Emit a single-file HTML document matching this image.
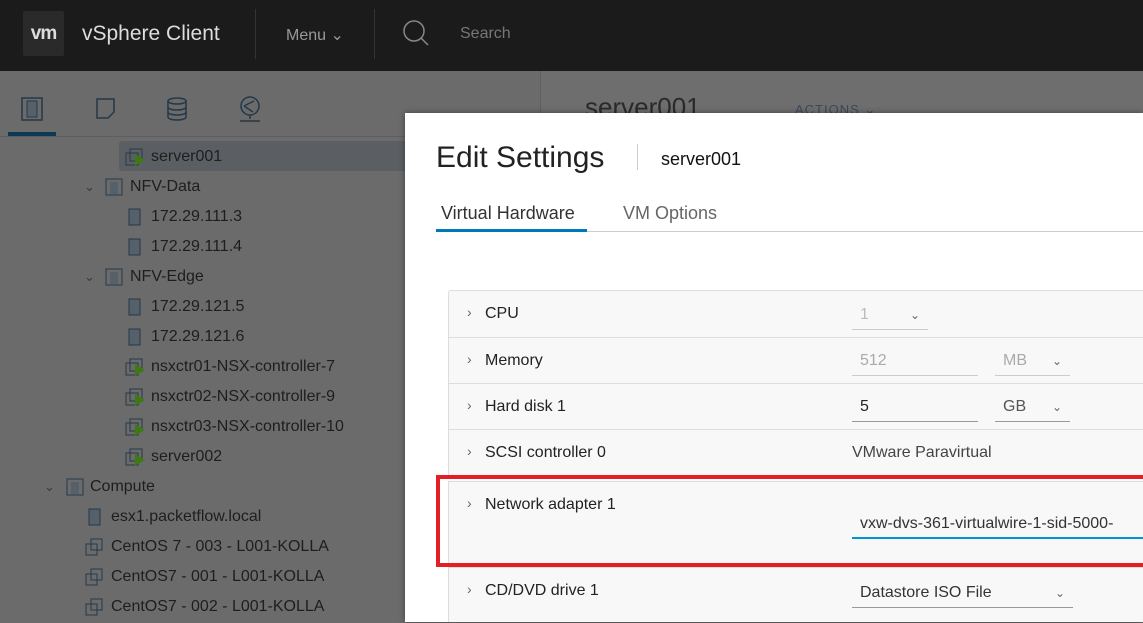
<!DOCTYPE html>
<html style="background:#6b6b6b"><head><style>
*{margin:0;padding:0;box-sizing:border-box}
body{width:1143px;height:622px;overflow:hidden;position:relative;background:#6b6b6b;font-family:"Liberation Sans",sans-serif;color:#1e1e1e}
.bg{position:absolute;left:0;top:0;width:1143px;height:622px;background:#6b6b6b}
.hdr{position:absolute;left:0;top:0;width:1143px;height:71px;background:#1b1b1b}
.abs{position:absolute;white-space:nowrap}
.row{position:absolute;font-size:16px;height:30px;line-height:32px;white-space:nowrap;color:#1e1e1e}
.row svg{position:absolute;top:7px}
.chev{position:absolute;top:0;color:#3a3a3a;font-size:13px}
.modal{position:absolute;left:405px;top:113px;width:738px;height:509px;background:#fff;box-shadow:0 0 6px rgba(0,0,0,.4)}
.tr{position:absolute;left:43px;width:700px;background:#f8f8f8;border-top:1px solid #ddd;font-size:16px;color:#222}
.tr .lbl{position:absolute;left:36px;top:14px}
.tr .ar{position:absolute;left:18px;top:13px;color:#666;font-size:14px}
.inp{position:absolute;border-bottom:1px solid #999;font-size:16px;height:30px;line-height:30px;padding-left:8px}
.dd{position:absolute;right:8px;top:0;color:#666;font-size:12px}
</style></head><body>
<div class="bg"></div>
<div class="hdr">
 <div class="abs" style="left:23px;top:11px;width:41px;height:45px;background:#2a2a2a;border-radius:2px;color:#ddd;font-weight:bold;font-size:19px;line-height:45px;text-align:center;letter-spacing:-1px">vm</div>
 <div class="abs" style="left:82px;top:22px;font-size:21px;color:#ddd">vSphere Client</div>
 <div class="abs" style="left:255px;top:9px;width:1px;height:50px;background:#333"></div>
 <div class="abs" style="left:286px;top:25px;font-size:16px;color:#999">Menu ⌄</div>
 <div class="abs" style="left:374px;top:9px;width:1px;height:50px;background:#333"></div>
 <svg class="abs" style="left:402px;top:19px" width="30" height="30"><circle cx="12" cy="12" r="10" stroke="#888" stroke-width="1.5" fill="none"/><line x1="19" y1="19" x2="26" y2="26" stroke="#888" stroke-width="1.5"/></svg>
 <div class="abs" style="left:460px;top:25px;font-size:16px;color:#777">Search</div>
</div>
<div class="abs" style="left:540px;top:71px;width:1px;height:551px;background:#5f5f5f"></div>
<div class="abs" style="left:541px;top:71px;width:602px;height:551px;background:#6e6e6e"></div>
<div class="abs" style="left:585px;top:92px;font-size:26px;color:#2a2a2a">server001</div>
<div class="abs" style="left:795px;top:102px;font-size:13px;color:#3a4a5a;letter-spacing:1px">ACTIONS ⌄</div>
<svg class="abs" style="left:20px;top:96px" width="26" height="26"><rect x="2" y="2" width="20" height="22" fill="none" stroke="#243848" stroke-width="1.5"/><rect x="7" y="5" width="10" height="16" fill="#55606a" stroke="#243848"/></svg>
<svg class="abs" style="left:94px;top:97px" width="24" height="24"><path d="M3 2h17v13l-6 6H3z" fill="none" stroke="#243848" stroke-width="1.5"/></svg>
<svg class="abs" style="left:166px;top:96px" width="22" height="26"><ellipse cx="11" cy="5" rx="9" ry="3" fill="none" stroke="#243848" stroke-width="1.5"/><path d="M2 5v16c0 4 18 4 18 0V5M2 11c0 4 18 4 18 0M2 16c0 4 18 4 18 0" fill="none" stroke="#243848" stroke-width="1.5"/></svg>
<svg class="abs" style="left:236px;top:95px" width="28" height="30"><circle cx="14" cy="11" r="9" fill="none" stroke="#243848" stroke-width="1.5"/><path d="M8 11l10-5M8 11l9 6M14 20v4M4 26h20" stroke="#243848" stroke-width="1.5" fill="none"/></svg>
<div class="abs" style="left:8px;top:132px;width:48px;height:4px;background:#0b3a55"></div>
<div class="abs" style="left:0;top:136px;width:540px;height:1px;background:#5e5e5e"></div>
<div class="abs" style="left:119px;top:141px;width:300px;height:30px;background:#5b5f63;border-radius:3px"></div>
<div class="row" style="top:141px;left:125px"><svg width="22" height="18" style="left:0"><rect x="1" y="5" width="12" height="12" fill="none" stroke="#243848"/><rect x="5" y="1" width="12" height="12" fill="none" stroke="#243848"/><path d="M10 6l10 6-10 6z" fill="#3d7a14"/></svg><span style="margin-left:26px">server001</span></div>
<div class="row" style="top:171px;left:84px"><span class="chev">⌄</span><svg width="18" height="18" style="left:21px"><rect x="1" y="1" width="16" height="16" fill="none" stroke="#243848"/><rect x="5" y="4" width="8" height="12" fill="#55606a"/></svg><span style="margin-left:46px">NFV-Data</span></div>
<div class="row" style="top:201px;left:128px"><svg width="14" height="18" style="left:0"><rect x="1" y="1" width="11" height="16" fill="#55606a" stroke="#243848"/></svg><span style="margin-left:23px">172.29.111.3</span></div>
<div class="row" style="top:231px;left:128px"><svg width="14" height="18" style="left:0"><rect x="1" y="1" width="11" height="16" fill="#55606a" stroke="#243848"/></svg><span style="margin-left:23px">172.29.111.4</span></div>
<div class="row" style="top:261px;left:84px"><span class="chev">⌄</span><svg width="18" height="18" style="left:21px"><rect x="1" y="1" width="16" height="16" fill="none" stroke="#243848"/><rect x="5" y="4" width="8" height="12" fill="#55606a"/></svg><span style="margin-left:46px">NFV-Edge</span></div>
<div class="row" style="top:291px;left:128px"><svg width="14" height="18" style="left:0"><rect x="1" y="1" width="11" height="16" fill="#55606a" stroke="#243848"/></svg><span style="margin-left:23px">172.29.121.5</span></div>
<div class="row" style="top:321px;left:128px"><svg width="14" height="18" style="left:0"><rect x="1" y="1" width="11" height="16" fill="#55606a" stroke="#243848"/></svg><span style="margin-left:23px">172.29.121.6</span></div>
<div class="row" style="top:351px;left:125px"><svg width="22" height="18" style="left:0"><rect x="1" y="5" width="12" height="12" fill="none" stroke="#243848"/><rect x="5" y="1" width="12" height="12" fill="none" stroke="#243848"/><path d="M10 6l10 6-10 6z" fill="#3d7a14"/></svg><span style="margin-left:26px">nsxctr01-NSX-controller-7</span></div>
<div class="row" style="top:381px;left:125px"><svg width="22" height="18" style="left:0"><rect x="1" y="5" width="12" height="12" fill="none" stroke="#243848"/><rect x="5" y="1" width="12" height="12" fill="none" stroke="#243848"/><path d="M10 6l10 6-10 6z" fill="#3d7a14"/></svg><span style="margin-left:26px">nsxctr02-NSX-controller-9</span></div>
<div class="row" style="top:411px;left:125px"><svg width="22" height="18" style="left:0"><rect x="1" y="5" width="12" height="12" fill="none" stroke="#243848"/><rect x="5" y="1" width="12" height="12" fill="none" stroke="#243848"/><path d="M10 6l10 6-10 6z" fill="#3d7a14"/></svg><span style="margin-left:26px">nsxctr03-NSX-controller-10</span></div>
<div class="row" style="top:441px;left:125px"><svg width="22" height="18" style="left:0"><rect x="1" y="5" width="12" height="12" fill="none" stroke="#243848"/><rect x="5" y="1" width="12" height="12" fill="none" stroke="#243848"/><path d="M10 6l10 6-10 6z" fill="#3d7a14"/></svg><span style="margin-left:26px">server002</span></div>
<div class="row" style="top:471px;left:44px"><span class="chev">⌄</span><svg width="18" height="18" style="left:22px"><rect x="1" y="1" width="16" height="16" fill="none" stroke="#243848"/><rect x="5" y="4" width="8" height="12" fill="#55606a"/></svg><span style="margin-left:46px">Compute</span></div>
<div class="row" style="top:501px;left:88px"><svg width="14" height="18" style="left:0"><rect x="1" y="1" width="11" height="16" fill="#55606a" stroke="#243848"/></svg><span style="margin-left:23px">esx1.packetflow.local</span></div>
<div class="row" style="top:531px;left:85px"><svg width="20" height="18" style="left:0"><rect x="1" y="6" width="11" height="11" fill="none" stroke="#243848"/><rect x="6" y="1" width="11" height="11" fill="none" stroke="#243848"/></svg><span style="margin-left:26px">CentOS 7 - 003 - L001-KOLLA</span></div>
<div class="row" style="top:561px;left:85px"><svg width="20" height="18" style="left:0"><rect x="1" y="6" width="11" height="11" fill="none" stroke="#243848"/><rect x="6" y="1" width="11" height="11" fill="none" stroke="#243848"/></svg><span style="margin-left:26px">CentOS7 - 001 - L001-KOLLA</span></div>
<div class="row" style="top:591px;left:85px"><svg width="20" height="18" style="left:0"><rect x="1" y="6" width="11" height="11" fill="none" stroke="#243848"/><rect x="6" y="1" width="11" height="11" fill="none" stroke="#243848"/></svg><span style="margin-left:26px">CentOS7 - 002 - L001-KOLLA</span></div>

<div class="modal">
 <div class="abs" style="left:31px;top:28px;font-size:30px;color:#222">Edit Settings</div>
 <div class="abs" style="left:232px;top:31px;width:1px;height:26px;background:#ccc"></div>
 <div class="abs" style="left:256px;top:36px;font-size:18px;color:#111">server001</div>
 <div class="abs" style="left:36px;top:90px;font-size:18px;color:#333">Virtual Hardware</div>
 <div class="abs" style="left:218px;top:90px;font-size:18px;color:#666">VM Options</div>
 <div class="abs" style="left:31px;top:118px;width:707px;height:1px;background:#ccc"></div>
 <div class="abs" style="left:31px;top:116px;width:151px;height:3px;background:#0079b8"></div>

 <div class="tr" style="top:177px;height:47px;border-radius:3px 0 0 0;border-left:1px solid #ddd"><span class="ar">›</span><span class="lbl">CPU</span>
  <div class="inp" style="left:403px;top:9px;width:76px;color:#bbb;border-color:#ccc">1<span class="dd">⌄</span></div></div>
 <div class="tr" style="top:224px;height:46px;border-left:1px solid #ddd"><span class="ar">›</span><span class="lbl">Memory</span>
  <div class="inp" style="left:403px;top:8px;width:126px;color:#aaa;border-color:#ccc">512</div>
  <div class="inp" style="left:546px;top:8px;width:75px;color:#aaa;border-color:#ccc">MB<span class="dd">⌄</span></div></div>
 <div class="tr" style="top:270px;height:46px;border-left:1px solid #ddd"><span class="ar">›</span><span class="lbl">Hard disk 1</span>
  <div class="inp" style="left:403px;top:8px;width:126px">5</div>
  <div class="inp" style="left:546px;top:8px;width:75px;color:#555">GB<span class="dd">⌄</span></div></div>
 <div class="tr" style="top:316px;height:47px;border-left:1px solid #ddd"><span class="ar">›</span><span class="lbl">SCSI controller 0</span>
  <div class="abs" style="left:403px;top:14px;color:#444">VMware Paravirtual</div></div>
 <div class="tr" style="top:368px;height:86px;border-left:1px solid #ddd"><span class="ar">›</span><span class="lbl">Network adapter 1</span>
  <div class="inp" style="left:403px;top:27px;width:300px;border-bottom:2px solid #0095d3;color:#333">vxw-dvs-361-virtualwire-1-sid-5000-</div></div>
 <div class="tr" style="top:454px;height:55px;border-left:1px solid #ddd"><span class="ar">›</span><span class="lbl">CD/DVD drive 1</span>
  <div class="inp" style="left:403px;top:10px;width:221px;color:#333">Datastore ISO File<span class="dd">⌄</span></div></div>
 <div class="abs" style="left:31px;top:362px;width:712px;height:92px;border:4px solid #e31e24;border-right:none"></div>
</div>
</body></html>
